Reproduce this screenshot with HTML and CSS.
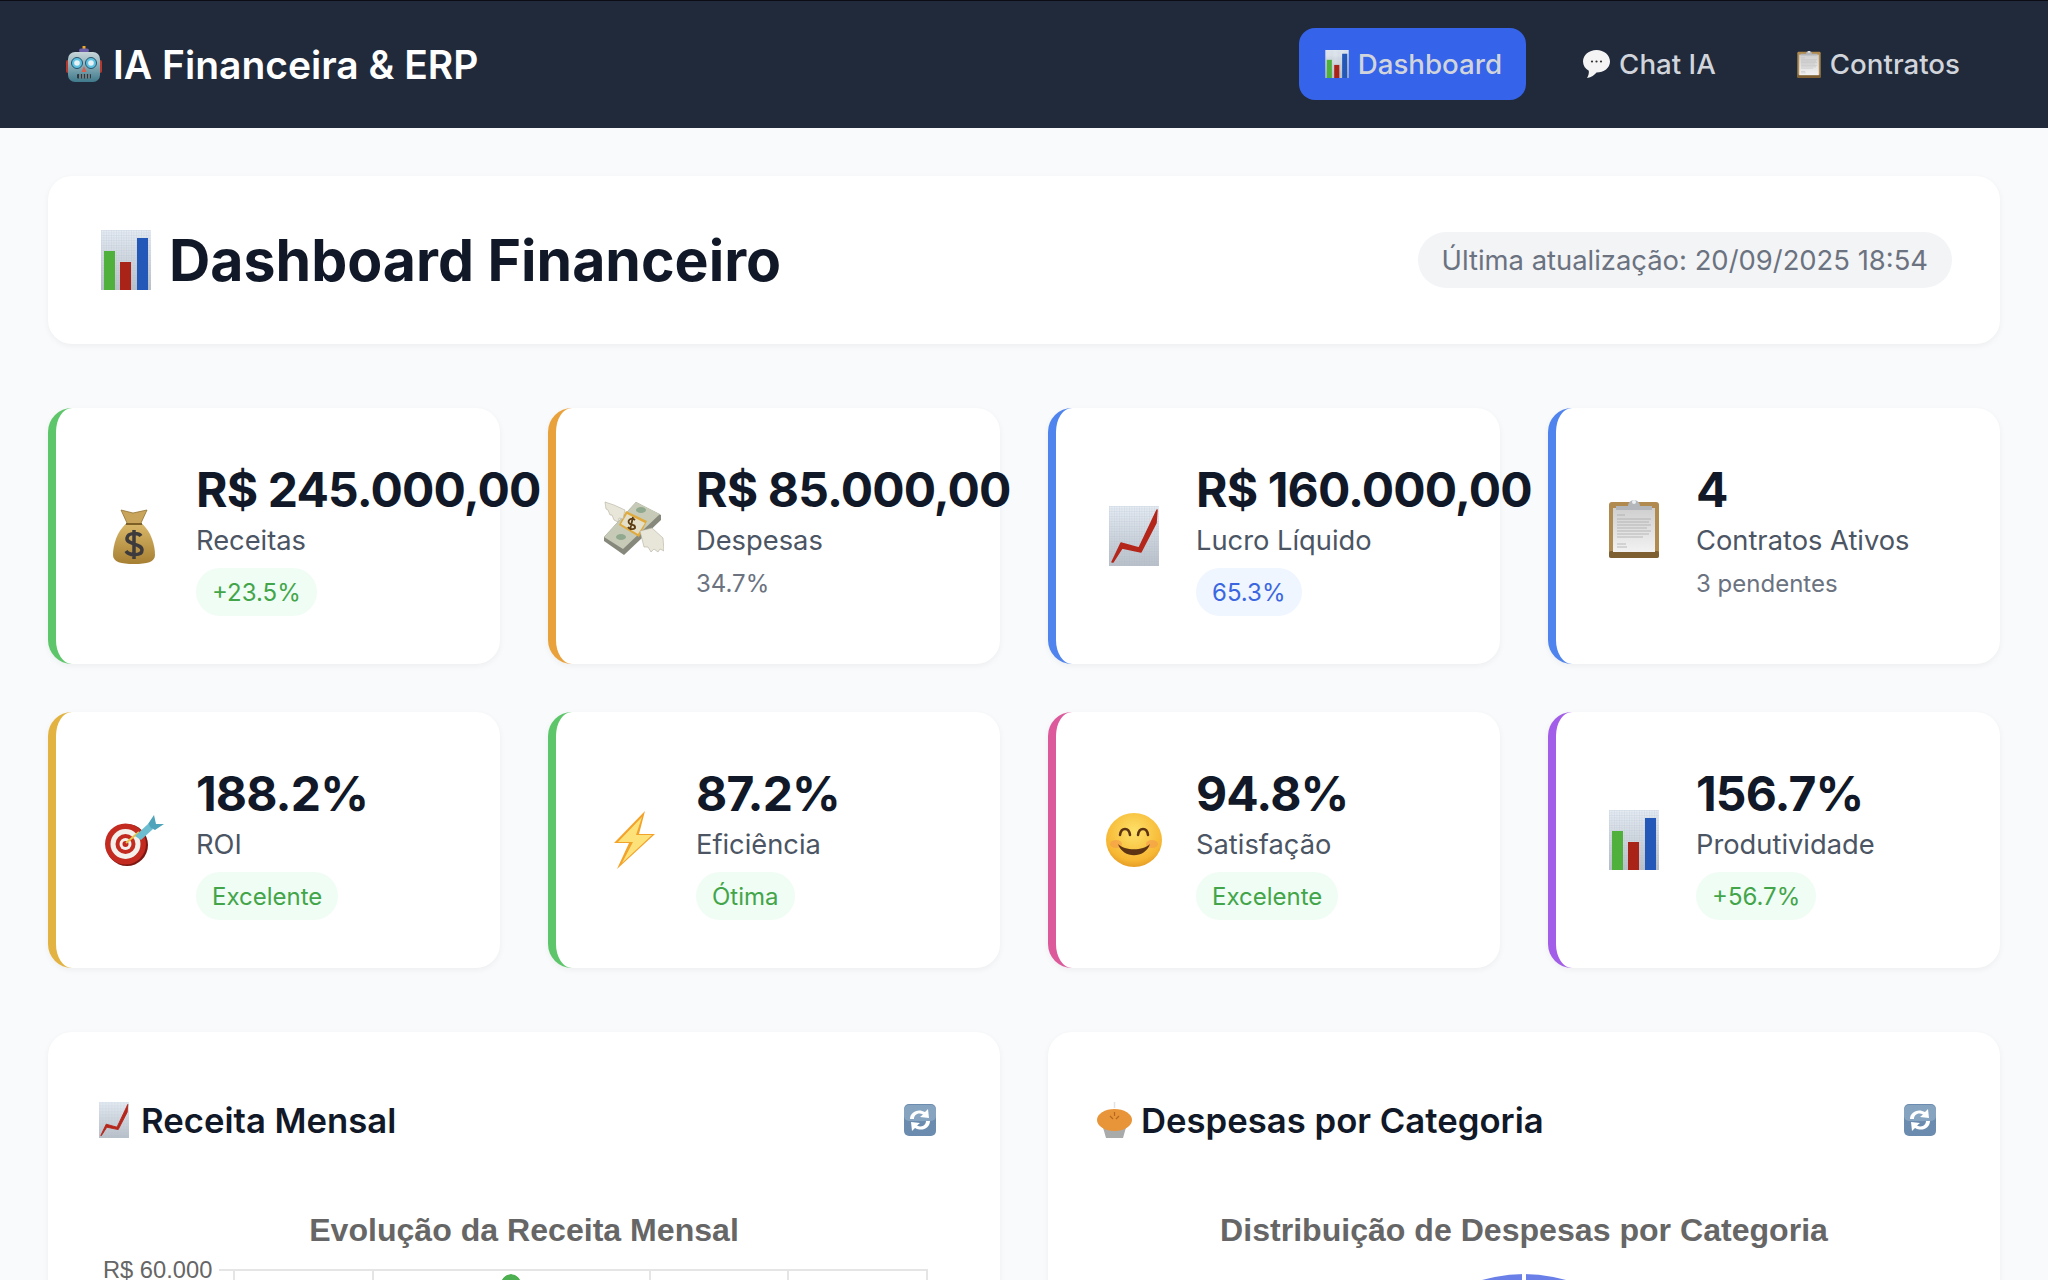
FILE: index.html
```html
<!DOCTYPE html>
<html lang="pt-BR">
<head>
    <meta charset="UTF-8">
    <title>IA Financeira &amp; ERP</title>
    <link rel="stylesheet" href="styles.css">
</head>
<body>
    <svg class="sprites" width="0" height="0" aria-hidden="true">
        <defs>
            <linearGradient id="grid-bg" x1="0" y1="0" x2="0" y2="1">
                <stop offset="0" stop-color="#e6ecf3"/>
                <stop offset="1" stop-color="#b9c0c8"/>
            </linearGradient>
            <pattern id="grid-lines" width="2.500" height="2.500" patternUnits="userSpaceOnUse">
                <path d="M0 0H2.500M0 0V2.500" stroke="#9fb2c8" stroke-width=".5" opacity=".6"/>
            </pattern>
            <linearGradient id="bag-fill" x1="0" y1="0" x2="0" y2="1">
                <stop offset="0" stop-color="#d9b768"/>
                <stop offset="1" stop-color="#a67f33"/>
            </linearGradient>
            <radialGradient id="face-fill" cx="0.5" cy="0.35" r="0.75">
                <stop offset="0" stop-color="#fde26a"/>
                <stop offset="0.7" stop-color="#f7b733"/>
                <stop offset="1" stop-color="#d98a1c"/>
            </radialGradient>
            <linearGradient id="clip-paper" x1="0" y1="0" x2="0" y2="1">
                <stop offset="0" stop-color="#cfcfcf"/>
                <stop offset="1" stop-color="#f2f2f2"/>
            </linearGradient>
            <linearGradient id="robot-fill" x1="0" y1="0" x2="0" y2="1">
                <stop offset="0" stop-color="#c9d6da"/>
                <stop offset="1" stop-color="#3f7a8c"/>
            </linearGradient>

            <symbol id="i-bars" viewBox="0 0 50 60">
                <rect width="50" height="60" fill="url(#grid-bg)"/>
                <rect width="50" height="60" fill="url(#grid-lines)"/>
                <rect x="3" y="21" width="11" height="39" fill="#4fb03c"/>
                <rect x="19" y="32" width="11" height="28" fill="#a92318"/>
                <rect x="36" y="8" width="11" height="52" fill="#2458b8"/>
            </symbol>
            <symbol id="i-trend" viewBox="0 0 50 60">
                <rect width="50" height="60" fill="url(#grid-bg)"/>
                <rect width="50" height="60" fill="url(#grid-lines)"/>
                <path d="M3 56 L12 37 L30 42 L48 4 L47 17 L32 46 L13 42 L4 56Z" fill="#b5261a" stroke="#b5261a" stroke-width="1.500" stroke-linejoin="round"/>
            </symbol>
            <symbol id="i-robot" viewBox="0 0 36 36">
                <rect x="16.500" y="0" width="3" height="3" fill="#f0a830"/>
                <rect x="13" y="2.500" width="10" height="4" rx="2" fill="#6a5fa8"/>
                <rect x="0" y="14" width="4" height="13" rx="2" fill="#b5392c"/>
                <rect x="32" y="14" width="4" height="13" rx="2" fill="#b5392c"/>
                <rect x="2" y="6" width="32" height="30" rx="7" fill="url(#robot-fill)"/>
                <ellipse cx="11" cy="17" rx="5.500" ry="5.500" fill="#5cc0e0" stroke="#28536a"/>
                <ellipse cx="25" cy="17" rx="5.500" ry="5.500" fill="#5cc0e0" stroke="#28536a"/>
                <circle cx="11" cy="17" r="2.800" fill="#e8f2f5"/>
                <circle cx="25" cy="17" r="2.800" fill="#e8f2f5"/>
                <path d="M18 20 L15.500 26 H20.500Z" fill="#d9604e"/>
                <rect x="11" y="28" width="14" height="4.500" rx="1" fill="#263a44"/>
                <path d="M14 28v4.500M17 28v4.500M20 28v4.500M23 28v4.500" stroke="#dfe7ea" stroke-width=".8"/>
            </symbol>
            <symbol id="i-speech" viewBox="0 0 27 28">
                <path d="M13.500 0 C21 0 27 5 27 11.500 C27 18 21 22.500 13.500 22.500 C11.500 25 8.500 27.500 4 28 C5.500 26 6 23.500 5.800 20.800 C2.300 18.800 0 15.500 0 11.500 C0 5 6 0 13.500 0Z" fill="#f4f4f4"/>
                <circle cx="9" cy="11.500" r="1.100" fill="#333"/>
                <circle cx="13.500" cy="11.500" r="1.100" fill="#333"/>
                <circle cx="18" cy="11.500" r="1.100" fill="#333"/>
            </symbol>
            <symbol id="i-clipboard" viewBox="0 0 50 60">
                <rect y="4" width="50" height="56" rx="3" fill="#b08a4e"/>
                <rect y="53" width="50" height="7" rx="2" fill="#7e5f32"/>
                <rect x="4" y="10" width="42" height="44" fill="url(#clip-paper)"/>
                <path d="M8 17h8M8 21h34M8 24h32M8 27h34M8 30h30M8 33h34M8 36h32M8 39h26M8 46h9M8 49h10" stroke="#a3a3a3" stroke-width=".7"/>
                <path d="M7 8 H19 A6 6 0 0 1 31 8 H43 V12 H7Z" fill="#b3b7bb"/>
                <circle cx="25" cy="4" r="2" fill="#eef1f3"/>
            </symbol>
            <symbol id="i-bag" viewBox="0 0 42 55">
                <path d="M8 1 L20 4 L34 1 L28 14 L31 18 H11 L14 14Z" fill="#c9a55c" stroke="#92722f" stroke-width=".8"/>
                <path d="M13 15 C4 22 0 36 0 46 C0 53 8 55 21 55 C34 55 42 53 42 46 C42 36 38 22 29 15Z" fill="url(#bag-fill)"/>
                <path d="M13 15 H29" stroke="#7e6027" stroke-width="2"/>
                <path d="M28 27 C26 24 15 23 14 29 C13 36 29 34 29 41 C29 47 16 47 13 42 M21 21 V50" fill="none" stroke="#3d3a3d" stroke-width="3.500"/>
            </symbol>
            <symbol id="i-flying" viewBox="0 0 60 54">
                <path d="M32 1 L57 14 L57 19 L20 54 L0 40 L0 36Z" fill="#85887b"/>
                <path d="M32 1 L56 13 L19 48 L0 36Z" fill="#c6cab6"/>
                <ellipse cx="37" cy="9" rx="5" ry="3" fill="#8fa88e"/>
                <ellipse cx="17" cy="36" rx="5" ry="3" fill="#8fa88e"/>
                <path d="M22 10 L43 20 L35 36 L15 24Z" fill="#e0aa3c"/>
                <path d="M23 13 L41 22 L34 33 L17 23Z" fill="#e4dfc8"/>
                <path d="M31 19 C28 16 23 19 25 22 C27 25 32 23 31 27 C29 29 25 28 24 26 M29 16 L26 29" fill="none" stroke="#5c3c12" stroke-width="1.800"/>
                <path d="M1 1 L10 4 L21 9 L19 18 L15 17 L14 21 L10 19 L8 14 L6 14 L4 9 L2 8Z" fill="#e8e6d8" stroke="#b4b0a0" stroke-width=".6"/>
                <path d="M36 30 L48 27 L59 37 L60 50 L56 48 L54 51 L50 48 L47 51 L44 46 L40 46Z" fill="#e8e6d8" stroke="#b4b0a0" stroke-width=".6"/>
            </symbol>
            <symbol id="i-target" viewBox="0 0 60 51">
                <circle cx="23" cy="30" r="21" fill="#7c1712"/>
                <circle cx="21.500" cy="29" r="20.500" fill="#c32a20"/>
                <circle cx="21.500" cy="29" r="15" fill="#f4f0ec"/>
                <circle cx="21.500" cy="29" r="10" fill="#c32a20"/>
                <circle cx="21.500" cy="29" r="6" fill="#f4f0ec"/>
                <circle cx="21.500" cy="29" r="3" fill="#c32a20"/>
                <path d="M22 28 L35 17" stroke="#e8c548" stroke-width="2"/>
                <path d="M31 21 L44 9 L49 14 L37 25Z" fill="#6dbdd0"/>
                <path d="M44 9 L50 0 L52 9 L60 9 L51 15 L47 13Z" fill="#4fa3ba"/>
            </symbol>
            <symbol id="i-bolt" viewBox="0 0 41 58">
                <path d="M31 0 L0 32 L15 32 L3 58 L41 23 L25 23Z" fill="#f3a32a"/>
                <path d="M28 6 L4 31 L19 31 L8 52 L38 24 L22 24Z" fill="#fde27a"/>
            </symbol>
            <symbol id="i-smile" viewBox="0 0 56 54">
                <ellipse cx="28" cy="27" rx="28" ry="27" fill="url(#face-fill)"/>
                <ellipse cx="10" cy="31" rx="6" ry="4" fill="#f49a4a" opacity=".6"/>
                <ellipse cx="46" cy="31" rx="6" ry="4" fill="#f49a4a" opacity=".6"/>
                <path d="M14 22 C15 14 23 14 24 22 M32 22 C33 14 41 14 42 22" fill="none" stroke="#5c3413" stroke-width="2.500" stroke-linecap="round"/>
                <path d="M12 31 C17 46 39 46 44 31 C37 38 19 38 12 31Z" fill="#5c3413"/>
            </symbol>
            <symbol id="i-refresh" viewBox="0 0 32 32">
                <rect width="32" height="32" rx="5" fill="#6b8cae"/>
                <rect y="1" width="32" height="16" rx="5" fill="#a9c0d4" opacity=".45"/>
                <path d="M6 15 C6 8 14 4 21 8 L24 5 L25 14 L16 13 L19 10.500 C14 8 10 11 10 15Z" fill="#fff"/>
                <path d="M26 17 C26 24 18 28 11 24 L8 27 L7 18 L16 19 L13 21.500 C18 24 22 21 22 17Z" fill="#fff"/>
            </symbol>
            <symbol id="i-pie" viewBox="0 0 35 36">
                <path d="M5 22 H30 L26 36 H9Z" fill="#a9abab"/>
                <ellipse cx="17.500" cy="18" rx="17.500" ry="11" fill="#e89438"/>
                <path d="M13 14l3 3M22 14l-3 3M17.500 10v4" stroke="#b5691f" stroke-width="1.200"/>
                <path d="M17.500 0v6" stroke="#e3e3e3" stroke-width="1.500"/>
            </symbol>
        </defs>
    </svg>

    <nav class="top-nav">
        <div class="brand">
            <svg class="icon-robot"><use href="#i-robot"/></svg>
            <span>IA Financeira &amp; ERP</span>
        </div>
        <div class="nav-links">
            <a class="nav-link active"><svg class="icon-nav-bars"><use href="#i-bars"/></svg>Dashboard</a>
            <a class="nav-link"><svg class="icon-nav-speech"><use href="#i-speech"/></svg>Chat IA</a>
            <a class="nav-link"><svg class="icon-nav-clip"><use href="#i-clipboard"/></svg>Contratos</a>
        </div>
    </nav>

    <main class="page">
        <header class="page-title card">
            <h1><svg class="icon-title"><use href="#i-bars"/></svg>Dashboard Financeiro</h1>
            <span class="last-update">Última atualização: 20/09/2025 18:54</span>
        </header>

        <section class="metrics">
            <article class="metric card green">
                <div class="metric-row">
                    <div class="metric-icon"><svg class="m-bag"><use href="#i-bag"/></svg></div>
                    <div class="metric-body">
                        <div class="metric-value">R$ 245.000,00</div>
                        <div class="metric-label">Receitas</div>
                        <span class="pill">+23.5%</span>
                    </div>
                </div>
            </article>
            <article class="metric card orange">
                <div class="metric-row">
                    <div class="metric-icon"><svg class="m-flying"><use href="#i-flying"/></svg></div>
                    <div class="metric-body">
                        <div class="metric-value">R$ 85.000,00</div>
                        <div class="metric-label">Despesas</div>
                        <span class="note">34.7%</span>
                    </div>
                </div>
            </article>
            <article class="metric card blue">
                <div class="metric-row">
                    <div class="metric-icon"><svg class="m-square"><use href="#i-trend"/></svg></div>
                    <div class="metric-body">
                        <div class="metric-value">R$ 160.000,00</div>
                        <div class="metric-label">Lucro Líquido</div>
                        <span class="pill pill-blue">65.3%</span>
                    </div>
                </div>
            </article>
            <article class="metric card blue">
                <div class="metric-row">
                    <div class="metric-icon"><svg class="m-square"><use href="#i-clipboard"/></svg></div>
                    <div class="metric-body">
                        <div class="metric-value">4</div>
                        <div class="metric-label">Contratos Ativos</div>
                        <span class="note">3 pendentes</span>
                    </div>
                </div>
            </article>
            <article class="metric card yellow">
                <div class="metric-row">
                    <div class="metric-icon"><svg class="m-target"><use href="#i-target"/></svg></div>
                    <div class="metric-body">
                        <div class="metric-value">188.2%</div>
                        <div class="metric-label">ROI</div>
                        <span class="pill">Excelente</span>
                    </div>
                </div>
            </article>
            <article class="metric card green">
                <div class="metric-row">
                    <div class="metric-icon"><svg class="m-bolt"><use href="#i-bolt"/></svg></div>
                    <div class="metric-body">
                        <div class="metric-value">87.2%</div>
                        <div class="metric-label">Eficiência</div>
                        <span class="pill">Ótima</span>
                    </div>
                </div>
            </article>
            <article class="metric card pink">
                <div class="metric-row">
                    <div class="metric-icon"><svg class="m-smile"><use href="#i-smile"/></svg></div>
                    <div class="metric-body">
                        <div class="metric-value">94.8%</div>
                        <div class="metric-label">Satisfação</div>
                        <span class="pill">Excelente</span>
                    </div>
                </div>
            </article>
            <article class="metric card purple">
                <div class="metric-row">
                    <div class="metric-icon"><svg class="m-square"><use href="#i-bars"/></svg></div>
                    <div class="metric-body">
                        <div class="metric-value">156.7%</div>
                        <div class="metric-label">Produtividade</div>
                        <span class="pill">+56.7%</span>
                    </div>
                </div>
            </article>
        </section>

        <section class="charts">
            <article class="chart-card card">
                <div class="chart-head">
                    <h3><svg class="icon-head"><use href="#i-trend"/></svg>Receita Mensal</h3>
                    <svg class="icon-refresh"><use href="#i-refresh"/></svg>
                </div>
                <div class="chart-title">Evolução da Receita Mensal</div>
                <div class="line-chart">
                    <span class="axis-label">R$ 60.000</span>
                    <div class="plot">
                        <span class="grid-col"></span>
                        <span class="grid-col"></span>
                        <span class="grid-col"><i class="point"></i></span>
                        <span class="grid-col"></span>
                        <span class="grid-col"></span>
                    </div>
                </div>
            </article>
            <article class="chart-card card">
                <div class="chart-head">
                    <h3 class="pie-head"><svg class="icon-head-pie"><use href="#i-pie"/></svg>Despesas por Categoria</h3>
                    <svg class="icon-refresh"><use href="#i-refresh"/></svg>
                </div>
                <div class="chart-title">Distribuição de Despesas por Categoria</div>
                <div class="pie-wrap">
                    <svg class="pie" viewBox="0 0 300 300">
                        <circle cx="150" cy="150" r="150" fill="#6a80e8"/>
                        <path d="M150 0 V150" stroke="#fff" stroke-width="4"/>
                    </svg>
                </div>
            </article>
        </section>
    </main>
</body>
</html>
```

FILE: styles.css
```css
* {
    margin: 0;
    padding: 0;
    box-sizing: border-box;
}

html, body {
    height: 100%;
    overflow: hidden;
}

body {
    background: #f9fafb;
    color: #111827;
    font-family: Inter, "Noto Sans", sans-serif;
}

.sprites {
    position: absolute;
}

svg {
    display: block;
    flex: none;
}

.card {
    background: #fff;
    box-shadow: 0 2px 6px rgba(0, 0, 0, 0.05);
}

/* top bar */
.top-nav {
    height: 128px;
    box-shadow: inset 0 1px 0 #0a0d14;
    background: #202a3b;
    padding: 0 64px 0 66px;
    display: flex;
    justify-content: space-between;
    align-items: center;
}

.brand {
    display: flex;
    align-items: center;
    gap: 11px;
    color: #fff;
    font-size: 39px;
    font-weight: 600;
}

.icon-robot {
    width: 36px;
    height: 36px;
}

.nav-links {
    display: flex;
    gap: 31px;
}

.nav-link {
    height: 72px;
    padding: 0 24px 0 26px;
    border-radius: 16px;
    display: flex;
    align-items: center;
    gap: 9px;
    color: #d1d5db;
    font-size: 27.700px;
    font-weight: 500;
}

.nav-link.active {
    background: #3563e9;
}

.icon-nav-bars {
    width: 24px;
    height: 28px;
}

.icon-nav-speech {
    width: 27px;
    height: 28px;
}

.icon-nav-clip {
    width: 24px;
    height: 28px;
}

/* page */
.page {
    padding: 48px;
}

.page-title {
    height: 168px;
    padding: 0 48px;
    border-radius: 24px;
    display: flex;
    justify-content: space-between;
    align-items: center;
    margin-bottom: 64px;
}

.page-title h1 {
    display: flex;
    align-items: center;
    gap: 18px;
    font-size: 57.200px;
    font-weight: 700;
}

.icon-title {
    width: 50px;
    height: 60px;
    margin-left: 5px;
}

.last-update {
    height: 56px;
    padding: 0 24px;
    border-radius: 28px;
    display: flex;
    align-items: center;
    background: #f3f4f6;
    color: #6b7280;
    font-size: 27.400px;
}

/* metric cards */
.metrics {
    display: grid;
    grid-template-columns: repeat(4, minmax(0, 1fr));
    gap: 48px;
    margin-bottom: 64px;
}

.metric {
    height: 256px;
    padding: 48px;
    border-left: 8px solid;
    border-radius: 24px;
}

.metric.green { border-left-color: #5ec66a; }
.metric.orange { border-left-color: #e9a23b; }
.metric.blue { border-left-color: #4f83ee; }
.metric.yellow { border-left-color: #e3b341; }
.metric.pink { border-left-color: #dc5a9c; }
.metric.purple { border-left-color: #a25ee8; }

.metric-row {
    display: flex;
    align-items: center;
    gap: 32px;
}

.metric-icon {
    width: 60px;
    height: 60px;
    flex: none;
    display: flex;
    justify-content: center;
    align-items: center;
}

.m-bag { width: 42px; height: 55px; }
.m-flying { width: 60px; height: 54px; }
.m-square { width: 50px; height: 60px; }
.m-target { width: 60px; height: 51px; }
.m-bolt { width: 41px; height: 58px; }
.m-smile { width: 56px; height: 54px; }

.metric-body {
    flex: 1;
    min-width: 0;
    white-space: nowrap;
}

.metric-value {
    height: 66px;
    font-size: 48px;
    line-height: 68px;
    font-weight: 700;
    letter-spacing: -0.85px;
}

.metric-label {
    height: 38px;
    margin-bottom: 8px;
    color: #4b5563;
    font-size: 27.300px;
    line-height: 38px;
}

.pill {
    display: block;
    width: fit-content;
    height: 48px;
    padding: 0 16px;
    border-radius: 24px;
    background: #f0fdf4;
    color: #43a54a;
    font-size: 24px;
    line-height: 50px;
}

.pill-blue {
    background: #eff6ff;
    color: #3b66e0;
}

.note {
    display: block;
    height: 32px;
    color: #6b7280;
    font-size: 24px;
    line-height: 32px;
}

/* chart cards */
.charts {
    display: grid;
    grid-template-columns: repeat(2, minmax(0, 1fr));
    gap: 48px;
}

.chart-card {
    height: 800px;
    padding: 48px;
    border-radius: 24px;
}

.chart-head {
    display: flex;
    justify-content: space-between;
    align-items: center;
    height: 80px;
    padding-right: 16px;
}

.chart-head h3 {
    display: flex;
    align-items: center;
    gap: 12px;
    padding-left: 3px;
    font-size: 34.700px;
    font-weight: 600;
}

.chart-head h3.pie-head {
    gap: 9px;
    padding-left: 1px;
}

.icon-head {
    width: 30px;
    height: 36px;
}

.icon-head-pie {
    width: 35px;
    height: 36px;
}

.icon-refresh {
    width: 32px;
    height: 32px;
}

.chart-title {
    margin-top: 50px;
    color: #666;
    font-family: "Liberation Sans", Arial, sans-serif;
    font-size: 32.100px;
    font-weight: 700;
    line-height: 40px;
    text-align: center;
}

/* only the top row of the chart is on screen */
.line-chart {
    display: flex;
    margin-top: 19px;
    padding: 0 24px 0 7px;
}

.axis-label {
    flex: none;
    width: 109px;
    margin-top: -13px;
    color: #666;
    font-family: "Liberation Sans", Arial, sans-serif;
    font-size: 23.700px;
    line-height: 28px;
    white-space: nowrap;
}

.plot {
    flex: 1;
    height: 400px;
    margin-left: 7px;
    padding-left: 14px;
    border-top: 2px solid #e5e5e5;
    display: flex;
}

.grid-col {
    flex: 1;
    position: relative;
    border-left: 2px solid #e5e5e5;
}

.grid-col:last-child {
    border-right: 2px solid #e5e5e5;
}

.point {
    position: absolute;
    left: -11px;
    top: 3px;
    width: 20px;
    height: 20px;
    border-radius: 50%;
    background: #4caf50;
    outline: 3px solid #fff;
}

.pie-wrap {
    margin-top: 24px;
    display: flex;
    justify-content: center;
}

.pie {
    width: 300px;
    height: 300px;
}
```
